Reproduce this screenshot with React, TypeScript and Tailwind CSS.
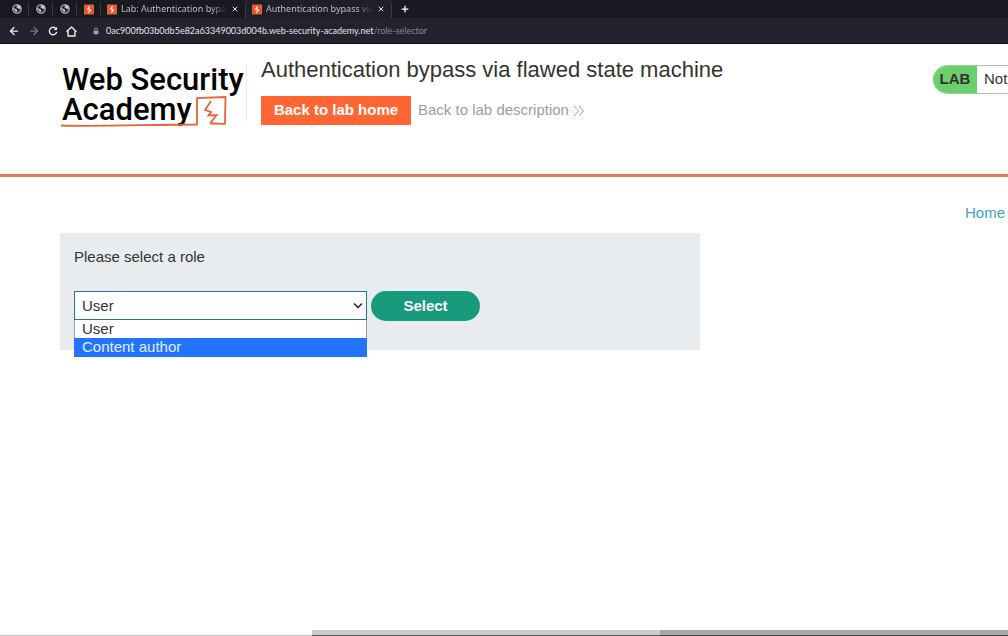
import { useState } from "react";
import type { ReactNode } from "react";
import { ArrowLeft, ArrowRight, Plus, X } from "lucide-react";

function Globe() {
  return (
    <svg viewBox="0 0 16 16" className="size-2.5" aria-hidden="true">
      <circle cx="8" cy="8" r="6.8" fill="#2a2b34" stroke="#b9b9c0" strokeWidth="1.8" />
      <path d="M2 6 L6 8.500 L8.500 9 L7.500 13.500 L5 12 L4.500 10 L2 8.500 Z M6 1.500 L12 2.500 L14.500 7 L11.500 8 L9 6.500 L7 6 L8.500 4 Z" fill="#c9c9ce" />
    </svg>
  );
}

function Bolt() {
  return (
    <svg viewBox="0 0 10 10" className="h-[11px] w-[10px] shrink-0" aria-hidden="true">
      <rect width="10" height="10" fill="#e8592f" />
      <path d="M5.6 0.800 L2.800 4.800 L5 5.200 L4 9.200 L7.400 5.400 L5.200 4.600 Z" fill="#fff" />
    </svg>
  );
}

function PinnedTab({ label, children }: { label: string; children: ReactNode }) {
  return (
    <button aria-label={label} className="flex h-3 w-6 items-center justify-center border-r border-[#3b3c47]">
      {children}
    </button>
  );
}

function Tab({ title, active = false }: { title: string; active?: boolean }) {
  return (
    <div
      className={
        active
          ? "flex h-[18px] w-[147px] items-center rounded-t border-x border-[#3b3c47] bg-[#1e1f28] px-1.5"
          : "flex h-[18px] w-36 items-center px-1.5"
      }
    >
      <Bolt />
      <button className="ml-1 min-w-0 flex-1 overflow-hidden bg-linear-to-r from-[#c8c8ce] from-85% to-transparent bg-clip-text text-left text-[9px] whitespace-nowrap text-transparent">
        {title}
      </button>
      <button aria-label="Close tab" className="ml-1 text-[#e4e4e8]">
        <X className="size-2" strokeWidth={3} />
      </button>
    </div>
  );
}

function Browser() {
  return (
    <div className="h-11 shrink-0 overflow-hidden border-b border-[#101118] bg-[#22232d] font-['Noto_Sans',sans-serif]">
      <div className="flex h-[18px] items-center bg-[#181921] pl-[5px]">
        <PinnedTab label="Pinned page 1"><Globe /></PinnedTab>
        <PinnedTab label="Pinned page 2"><Globe /></PinnedTab>
        <PinnedTab label="Pinned page 3"><Globe /></PinnedTab>
        <PinnedTab label="Pinned lab"><Bolt /></PinnedTab>
        <Tab title="Lab: Authentication bypass" />
        <Tab title="Authentication bypass via" active />
        <button aria-label="New tab" className="ml-2 text-white">
          <Plus className="size-2.5" strokeWidth={3} />
        </button>
      </div>
      <div className="flex h-[26px] items-center pl-2">
        <button aria-label="Back" className="mr-2 text-[#f0f0f4]"><ArrowLeft className="size-3" strokeWidth={2.5} /></button>
        <button aria-label="Forward" className="mr-2 text-[#777883]"><ArrowRight className="size-3" strokeWidth={2.5} /></button>
        <button aria-label="Reload" className="mr-2 text-[#f0f0f4]">
          <svg viewBox="0 0 16 16" className="size-[10px]" fill="none" stroke="currentColor" strokeWidth="2.2">
            <path d="M13 4.500 A6 6 0 1 0 14 9.500" />
            <path d="M14.500 1 V6.500 H9 Z" fill="currentColor" stroke="none" />
          </svg>
        </button>
        <button aria-label="Home page" className="text-[#f0f0f4]">
          <svg viewBox="0 0 16 16" className="size-[11px]" fill="none" stroke="currentColor" strokeWidth="2" strokeLinejoin="round">
            <path d="M0.800 8.500 L8 1.500 L15.200 8.500 M3 7.500 V14.500 H13 V7.500" />
          </svg>
        </button>
        <svg viewBox="0 0 10 12" className="mr-[7px] ml-4 h-2 w-1.5" aria-hidden="true">
          <path d="M2.500 5 V3.500 A2.500 2.500 0 0 1 7.500 3.500 V5" fill="none" stroke="#a5a5ad" strokeWidth="1.5" />
          <rect x="1" y="5" width="8" height="6.500" rx="1" fill="#a5a5ad" />
        </svg>
        <p className="font-['Lato',sans-serif] text-[9px] text-[#e4e4e8]">
          0ac900fb03b0db5e82a63349003d004b.web-security-academy.net<span className="text-[#868792]">/role-selector</span>
        </p>
      </div>
    </div>
  );
}

function Logo() {
  return (
    <a href="#academy" className="relative block h-[70px] w-[186px] shrink-0 font-['Roboto',sans-serif] text-[31px] leading-[30px] font-medium whitespace-nowrap text-black">
      <span className="block pl-0.5">Web Security</span>
      <span className="block pl-0.5">Academy</span>
      <svg viewBox="0 0 186 70" className="absolute inset-0 h-[70px] w-[186px]" fill="none" stroke="#e8623a" strokeWidth="1.8" aria-hidden="true">
        <path d="M1 60.500 C40 61.800 90 59.500 137 59.500 L137 33 L165.500 32 L165 58.800 L150 58.500" />
        <path d="M151 36 L145 45 L151 47 L148.500 50.500 L156.500 50 L150 58.500" />
      </svg>
    </a>
  );
}

const roles = ["User", "Content author"];

export default function App() {
  const [role, setRole] = useState("User");
  return (
    <div className="flex h-screen flex-col overflow-hidden bg-white font-['Liberation_Sans',Arial,sans-serif] text-[15px] text-[#333332]">
      <Browser />
      <header className="flex h-[133px] shrink-0 border-b-3 border-[#e17a5c] pt-[21px] pl-[60px]">
        <Logo />
        <div className="h-14 w-px shrink-0 bg-[#e8e8e8]" />
        <div className="-mt-2 ml-[14px] grow">
          <h1 className="text-[22px] leading-[26px] whitespace-nowrap">Authentication bypass via flawed state machine</h1>
          <div className="mt-[13px] flex items-center gap-[7px]">
            <a href="#home" className="flex h-[29px] w-[150px] items-center justify-center bg-[#ff6633] font-bold text-white">Back to lab home</a>
            <a href="#description" className="flex items-center gap-1 text-[#9c9c9b]">
              Back to lab description
              <svg viewBox="0 0 12 12" className="size-3" fill="none" stroke="currentColor" aria-hidden="true">
                <path d="M1 1 L5.500 6 L1 11 M6 1 L10.500 6 L6 11" />
              </svg>
            </a>
          </div>
        </div>
        <div className="flex h-[29px] w-[75px] shrink-0 overflow-hidden rounded-l-full border-y border-[#a0cf9c] whitespace-nowrap">
          <strong className="flex w-11 shrink-0 items-center justify-center bg-[#6bcf6b]">LAB</strong>
          <span className="flex shrink-0 items-center pl-[7px]">Not</span>
        </div>
      </header>
      <main className="grow pt-[26px]">
        <nav className="flex justify-end pr-[3px]">
          <a href="#" className="leading-5 text-[#3da5cc]">Home</a>
        </nav>
        <form className="mt-[10px] ml-[60px] h-[117px] w-[640px] bg-[#e8ecef] px-3.5 pt-3.5" onSubmit={(e) => e.preventDefault()}>
          <label htmlFor="role" className="block leading-5">Please select a role</label>
          <div className="mt-6 flex items-start gap-1">
            <div className="relative w-[293px]">
              <select id="role" value={role} onChange={(e) => setRole(e.target.value)} className="block h-[29px] w-full appearance-none border border-[#2a73a0] bg-white px-[7px] pt-px outline-none">
                {roles.map((r) => <option key={r}>{r}</option>)}
              </select>
              <svg viewBox="0 0 10 8" className="pointer-events-none absolute top-[11px] right-1 h-2 w-2.5" fill="none" stroke="#222" strokeWidth="1.5" aria-hidden="true">
                <path d="M1 1.500 L5 5.500 L9 1.500" />
              </svg>
              <ul role="listbox" aria-label="Roles" className="absolute top-full right-0 left-0 border border-t-0 border-[#9a9fb0] bg-white leading-[18px]">
                <li role="option" aria-selected="false" className="px-[7px]">User</li>
                <li role="option" aria-selected="true" className="-mx-px -mb-px bg-[#2374fd] px-2 pb-px text-[#e4eefe]">Content author</li>
              </ul>
            </div>
            <button className="h-[30px] w-[109px] rounded-full bg-[#179b7c] font-bold text-white">Select</button>
          </div>
        </form>
      </main>
      <footer className="flex h-1.5 shrink-0">
        <div className="w-[31%] border-b border-[#c4c4c4] bg-white" />
        <div className="w-[348px] border-b border-[#555] bg-[#cbcbcb]" />
        <div className="grow border-b border-[#444] bg-[#a8a8a8]" />
      </footer>
    </div>
  );
}
